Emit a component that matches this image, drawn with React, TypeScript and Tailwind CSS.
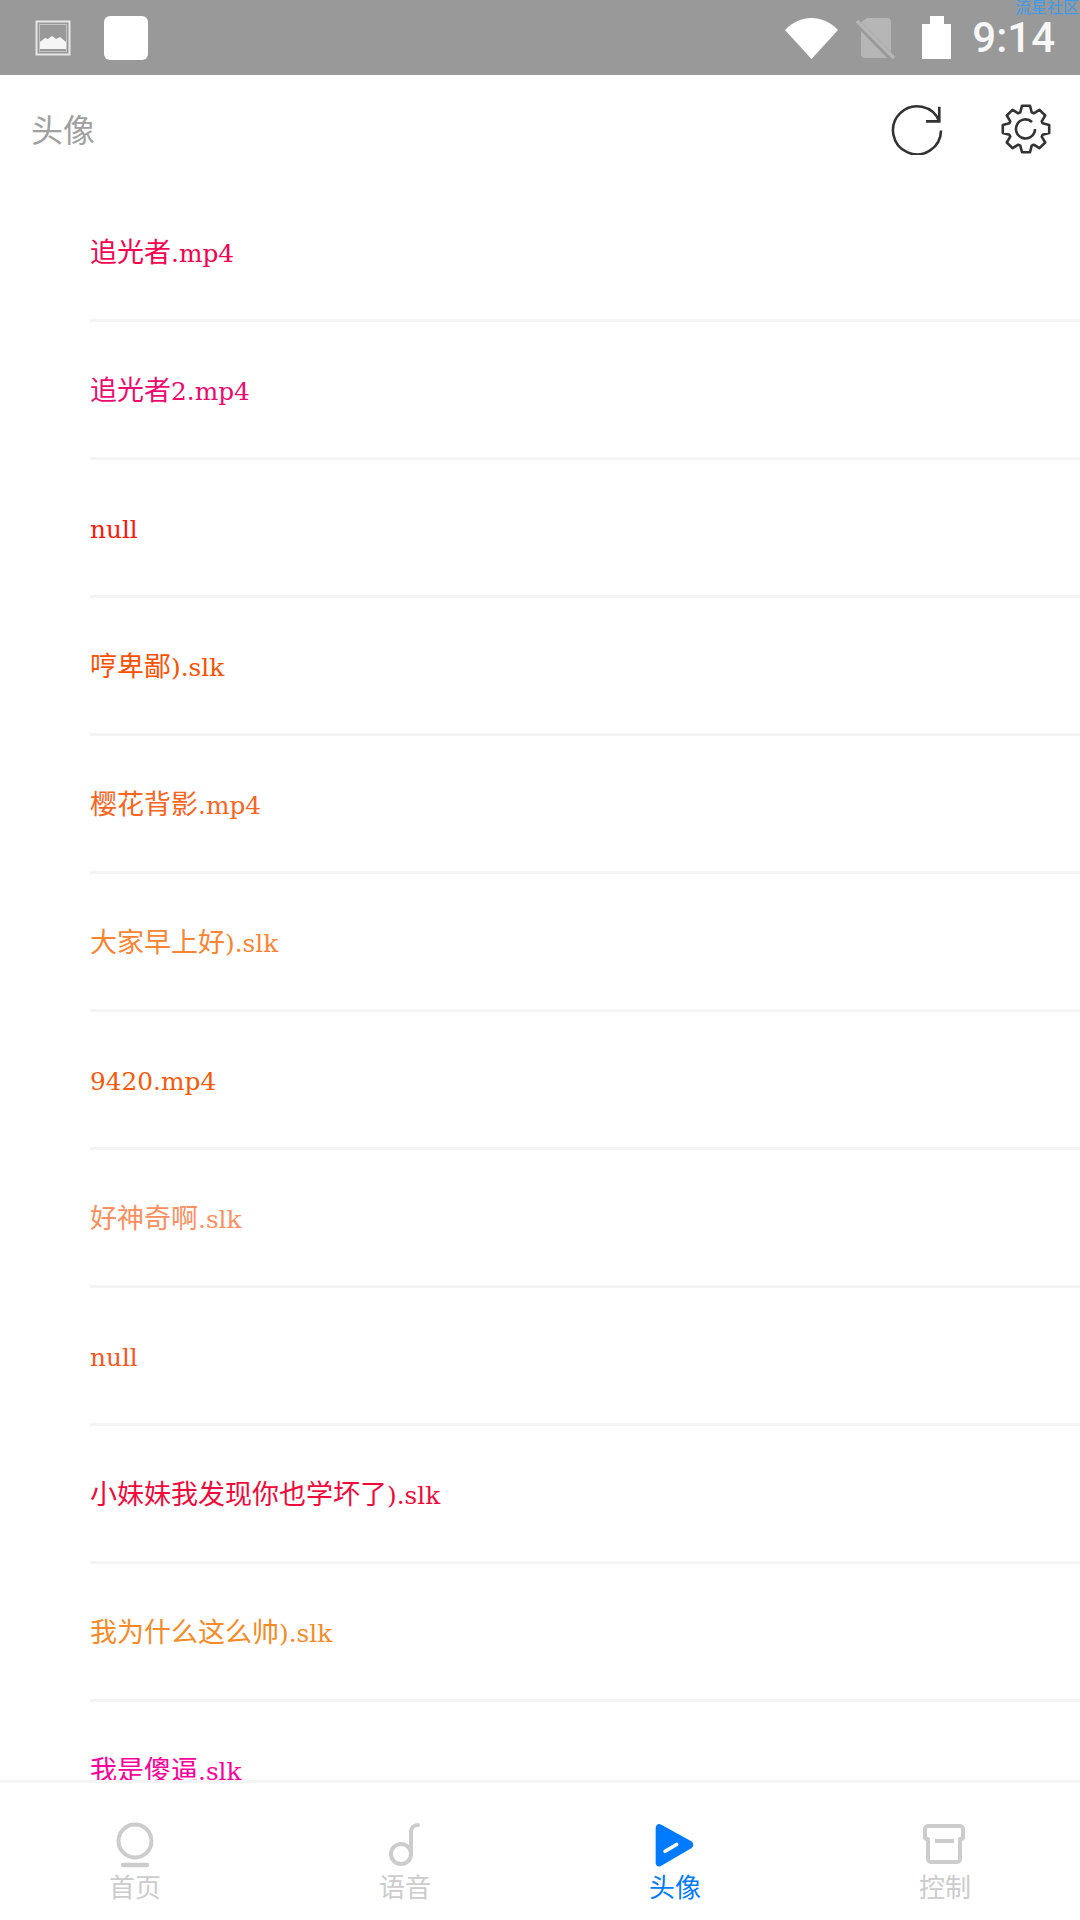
import { ReactNode } from "react";

const rows = [
  { name: "追光者.mp4", color: "text-[#f5004f]" },
  { name: "追光者2.mp4", color: "text-[#ec0a6e]" },
  { name: "null", color: "text-[#fb1a0a]" },
  { name: "哼卑鄙).slk", color: "text-[#fb5000]" },
  { name: "樱花背影.mp4", color: "text-[#f9651f]" },
  { name: "大家早上好).slk", color: "text-[#f98431]" },
  { name: "9420.mp4", color: "text-[#f55a09]" },
  { name: "好神奇啊.slk", color: "text-[#fb8f5f]" },
  { name: "null", color: "text-[#f8551f]" },
  { name: "小妹妹我发现你也学坏了).slk", color: "text-[#f00a3c]" },
  { name: "我为什么这么帅).slk", color: "text-[#f58a28]" },
  { name: "我是傻逼.slk", color: "text-[#f9009a]" },
];

const gearPath = (() => {
  const pts: string[] = [];
  const cx = 26;
  const cy = 26;
  for (let i = 0; i < 8; i++) {
    const a = (i * Math.PI) / 4 - Math.PI / 2;
    const step = Math.PI / 4;
    const seq: [number, number][] = [
      [17.5, a - step * 0.42],
      [23.5, a - step * 0.22],
      [23.5, a + step * 0.22],
      [17.5, a + step * 0.42],
    ];
    seq.forEach(([r, t]) => {
      pts.push(`${(cx + r * Math.cos(t)).toFixed(1)} ${(cy + r * Math.sin(t)).toFixed(1)}`);
    });
  }
  return `M${pts.join("L")}Z`;
})();

const ImageIcon = () => (
  <svg width="36" height="36" viewBox="0 0 36 36" fill="none">
    <rect x="1.5" y="1.5" width="33" height="33" stroke="#e6e6e6" strokeWidth="2" />
    <rect x="4.5" y="4.5" width="27" height="27" stroke="#c4c4c4" strokeWidth="1" />
    <path d="M5 29v-7l5-4 3 1 4-3 4 3 4-2 6 5v7z" fill="#f5f5f5" />
  </svg>
);

const StatusIcons = () => (
  <>
    <svg width="54" height="44" viewBox="0 0 54 44" fill="#fff">
      <path d="M0 14C15 -2 38 -2 53 14L26.500 43Z" />
    </svg>
    <svg width="40" height="44" viewBox="0 0 40 44" className="ml-[17px]">
      <path d="M11 2h20a4 4 0 0 1 4 4v30l-30-30zM5 15l26 27H9a4 4 0 0 1-4-4z" fill="#b6b6b6" />
      <path d="M1 5l37 37" stroke="#b6b6b6" strokeWidth="3.500" />
    </svg>
    <svg width="30" height="44" viewBox="0 0 30 44" fill="#fff" className="ml-[26px]">
      <path d="M8 0h14v8h7v35H0V8h8z" />
    </svg>
  </>
);

const RefreshIcon = () => (
  <svg width="52" height="52" viewBox="0 0 52 52" fill="none" stroke="#333" strokeWidth="2.600">
    <path d="M50 27.500A24 24 0 1 1 48.300 18.400" />
    <path d="M48.300 3.700V18.400H35" />
  </svg>
);

const GearIcon = () => (
  <svg width="52" height="52" viewBox="0 0 52 52" fill="none" stroke="#333" strokeWidth="2.600">
    <path d={gearPath} strokeLinejoin="round" />
    <path d="M35 26a9.500 9.500 0 1 1-3-7" />
  </svg>
);

const Tab = ({ label, active, icon }: { label: string; active?: boolean; icon: ReactNode }) => (
  <div className="flex flex-1 flex-col items-center">
    <div className="flex h-[44px] w-[50px] items-center justify-center">{icon}</div>
    <span
      className={`mt-[3px] text-[26px] leading-[32px] ${active ? "text-[#007aff]" : "text-[#cccccc]"}`}
    >
      {label}
    </span>
  </div>
);

export default function App() {
  return (
    <div className="relative flex h-[1920px] w-[1080px] flex-col overflow-hidden bg-white font-['Noto_Sans_CJK_SC',sans-serif]">
      <span className="absolute top-[-4px] left-[1015px] z-10 text-[16px] leading-[20px] whitespace-nowrap text-[#3f9ae8]">
        流星社区
      </span>

      <div className="flex h-[75px] shrink-0 items-center bg-[#999999] pl-[35px] pr-[25px]">
        <ImageIcon />
        <div className="ml-[33px] h-[44px] w-[44px] rounded-[6px] bg-white" />
        <div className="ml-auto flex items-center">
          <StatusIcons />
          <span className="ml-[20px] font-['Roboto',sans-serif] text-[42px] leading-none font-medium text-[#f7f7f7]">
            9:14
          </span>
        </div>
      </div>

      <div className="flex h-[109px] shrink-0 items-center pr-[28px] pb-[1px] pl-[31px]">
        <span className="mb-[2px] text-[32px] text-[#a0a0a0]">头像</span>
        <div className="ml-auto flex items-center gap-[57px]">
          <RefreshIcon />
          <GearIcon />
        </div>
      </div>

      <div className="min-h-0 flex-1 overflow-hidden">
        {rows.map((row, i) => (
          <div key={i} className="ml-[90px] flex h-[138px] shrink-0 items-center border-b-[3px] border-[#f4f4f4] pt-[3px]">
            <span
              className={`font-['DejaVu_Serif','Noto_Sans_CJK_SC',serif] text-[27px] ${row.color}`}
            >
              {row.name.split(/([\x00-\x7f]+)/).map((part, j) =>
                j % 2 === 1 ? (
                  <span key={j} className="text-[24.800px]">
                    {part}
                  </span>
                ) : (
                  part
                )
              )}
            </span>
          </div>
        ))}
      </div>

      <nav className="flex h-[140px] shrink-0 border-t-[3px] border-[#f4f4f4] pt-[40px]">
        <Tab
          label="首页"
          icon={
            <svg width="40" height="46" viewBox="0 0 40 46" fill="none" stroke="#cccccc" strokeWidth="4">
              <circle cx="20" cy="19" r="16.500" />
              <path d="M8 43h24" strokeWidth="4.500" strokeLinecap="round" />
            </svg>
          }
        />
        <Tab
          label="语音"
          icon={
            <svg width="34" height="46" viewBox="0 0 34 46" fill="none" stroke="#cccccc" strokeWidth="4">
              <circle cx="13" cy="32" r="10" />
              <path d="M23 32V10c0-4 2.500-7 7-7" strokeLinecap="round" />
            </svg>
          }
        />
        <Tab
          label="头像"
          active
          icon={
            <svg width="40" height="44" viewBox="0 0 37 42" fill="#007aff" className="mr-[2px]">
              <path d="M1 5c0-3 2.500-5 5-3.500l29 16c2.500 1.500 2.500 5 0 6.500L6 41c-2.500 1.500-5 0-5-3z" />
              <path d="M10 27l11-6.500" stroke="#fff" strokeWidth="3.500" strokeLinecap="round" />
            </svg>
          }
        />
        <Tab
          label="控制"
          icon={
            <svg width="42" height="40" viewBox="0 0 42 40" fill="none" stroke="#cccccc" strokeWidth="4" className="mr-[2px] mb-[2px]">
              <path d="M5 15H4a2 2 0 0 1-2-2V5a3 3 0 0 1 3-3h32a3 3 0 0 1 3 3v8a2 2 0 0 1-2 2h-1v20a3 3 0 0 1-3 3H8a3 3 0 0 1-3-3z" strokeLinejoin="round" />
              <path d="M12 17h19" />
            </svg>
          }
        />
      </nav>
    </div>
  );
}
